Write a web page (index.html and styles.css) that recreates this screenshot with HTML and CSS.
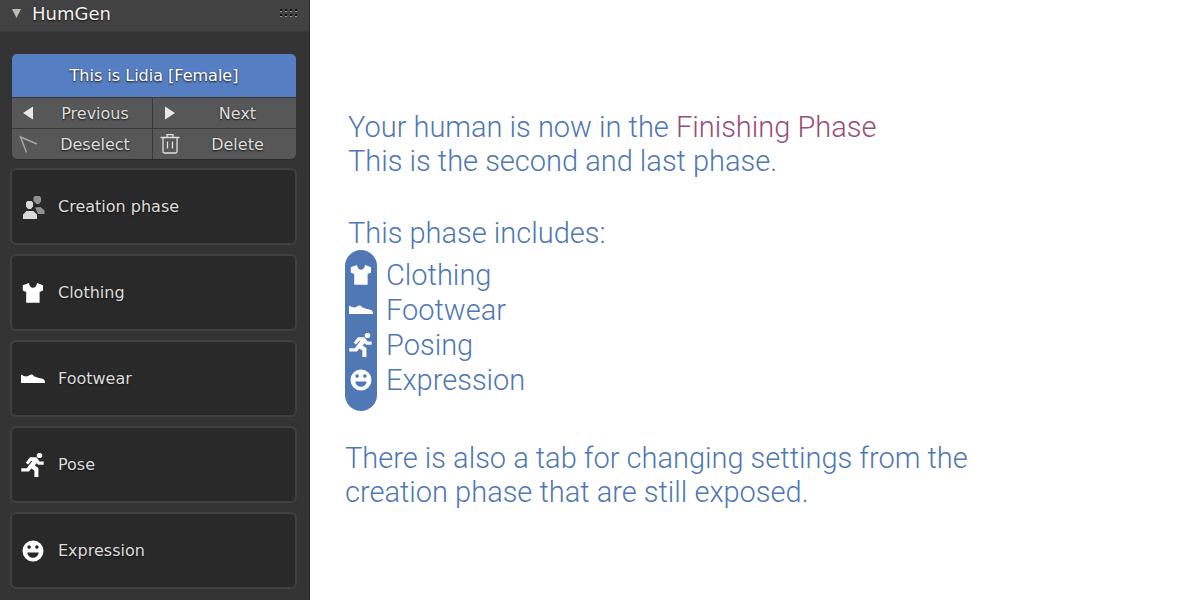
FILE: index.html
```html
<!DOCTYPE html>
<html lang="en">
<head>
<meta charset="utf-8">
<title>HumGen</title>
<link rel="stylesheet" href="styles.css">
</head>
<body>
<svg class="defs" aria-hidden="true">
  <symbol id="shirt" viewBox="0 0 24 24"><path d="M8 2 1.800 4.200v5.300l3.400 1.500v10.800h13.400V11l3.400-1.500V4.200L16 2C15.700 8.400 8.300 8.400 8 2z"/></symbol>
  <symbol id="shoe" viewBox="0 0 24 24"><path d="M0 8.200 1 7.500C2 9.300 4.500 9.600 6.500 9.300L10 7.500h1.200l2.300 2 4.500 1.500 3.500.7c1.800.6 2.500 1.700 2.500 4.300H0z"/></symbol>
  <symbol id="run" viewBox="0 0 24 24"><path d="M17.300 0h2.400l1.500 1.400v2.200L19.700 5h-2.400l-1.500-1.400V1.400zM9 4.300h6.500l3.200 4.200h4v3.200h-5.500l-1.700-1.500-1.700 2.300 3.600 2.500v9h-4v-6.600l-3.200-2-2.200 3H.3v-3.200h5.500L11.300 8H10l-2.800 3.600-2.500-1.800z"/></symbol>
  <symbol id="smile" viewBox="0 0 24 24"><path fill-rule="evenodd" d="M12 1.500a10.500 10.500 0 1 0 0 21 10.500 10.500 0 0 0 0-21zM8.100 6.300a1.800 1.800 0 1 1 0 3.600 1.800 1.800 0 0 1 0-3.600zm7.800 0a1.800 1.800 0 1 1 0 3.600 1.800 1.800 0 0 1 0-3.600zM6.300 13.500h11.400c-.8 7-10.600 7-11.400 0z"/></symbol>
</svg>
<div class="app">
  <aside class="panel">
    <h1 class="panel-head">
      <svg class="caret" viewBox="0 0 9 9"><path d="M0 0h9L4.500 9z"/></svg>
      <span class="panel-title">HumGen</span>
      <svg class="grip" viewBox="0 0 17 8"><g class="grip-dark"><path d="M0 0h2v2H0zM5 0h2v2H5zM10 0h2v2h-2zM15 0h2v2h-2zM0 5h2v2H0zM5 5h2v2H5zM10 5h2v2h-2zM15 5h2v2h-2z"/></g><path d="M0 2h2v1H0zM5 2h2v1H5zM10 2h2v1h-2zM15 2h2v1h-2zM0 7h2v1H0zM5 7h2v1H5zM10 7h2v1h-2zM15 7h2v1h-2z"/></svg>
    </h1>
    <div class="panel-body">
      <div class="actions">
        <button class="current" type="button">This is Lidia [Female]</button>
        <button class="action" type="button"><svg class="action-icon" viewBox="0 0 22 22"><path d="M15 4.500v13L5 11z"/></svg><span>Previous</span></button>
        <button class="action" type="button"><svg class="action-icon" viewBox="0 0 22 22"><path d="M6 4.500v13l10-6.500z"/></svg><span>Next</span></button>
        <button class="action" type="button"><svg class="action-icon" viewBox="0 0 22 22"><path class="cursor" d="M8.500 19.500 2.500 4l16.500 7"/></svg><span>Deselect</span></button>
        <button class="action" type="button"><svg class="action-icon" viewBox="0 0 22 22"><path class="bin" d="M1.500 4.500h19M8 4V1.700h6V4M4 5v13.500q0 1.500 1.500 1.500h11q1.500 0 1.500-1.500V5M8.500 8.500v7M13.500 8.500v7"/></svg><span>Delete</span></button>
      </div>
      <button class="section" type="button"><svg class="section-icon" viewBox="0 0 24 24"><path class="back" d="M13.500 1h5L20 2.500v4L18 9h-2.500L12.500 6V2.500zM14 12.500l5.500-.5 4 3.500V19H17z"/><path class="front" d="M6.500 6h4L12 7.500v4L10 14H7l-2-2.500v-4zM2 24v-4.500L5.500 16h7l3.500 3.500V24z"/></svg>Creation phase</button>
      <button class="section" type="button"><svg class="section-icon"><use href="#shirt"/></svg>Clothing</button>
      <button class="section" type="button"><svg class="section-icon"><use href="#shoe"/></svg>Footwear</button>
      <button class="section" type="button"><svg class="section-icon"><use href="#run"/></svg>Pose</button>
      <button class="section" type="button"><svg class="section-icon"><use href="#smile"/></svg>Expression</button>
    </div>
  </aside>
  <main class="guide">
    <p class="intro">Your human is now in the <span class="phase">Finishing Phase</span><br>This is the second and last phase.</p>
    <p class="lead">This phase includes:</p>
    <div class="includes">
      <div class="pill">
        <svg class="pill-icon"><use href="#shirt"/></svg>
        <svg class="pill-icon"><use href="#shoe"/></svg>
        <svg class="pill-icon"><use href="#run"/></svg>
        <svg class="pill-icon"><use href="#smile"/></svg>
      </div>
      <ul class="names"><li>Clothing</li><li>Footwear</li><li>Posing</li><li>Expression</li></ul>
    </div>
    <p class="note">There is also a tab for changing settings from the<br>creation phase that are still exposed.</p>
  </main>
</div>
</body>
</html>
```
FILE: styles.css
```css
* { box-sizing: border-box; }
body { margin: 0; background: #fff; }
.defs { position: absolute; width: 0; height: 0; }
.app { display: flex; min-height: 100vh; }

.panel {
  flex: 0 0 310px;
  background: #333;
  border-right: 1px solid #292929;
  color: #dcdcdc;
  font-family: "DejaVu Sans", sans-serif;
  font-size: 16px;
}
.panel button { font: inherit; color: inherit; border: 0; margin: 0; text-shadow: 0 1px 2px #111; }
.panel-head {
  display: flex;
  align-items: center;
  height: 32px;
  margin: 0;
  padding: 0 12px 5px 12px;
  background: #424242;
  border-bottom: 1px solid #393939;
  font-size: 18px;
  font-weight: 400;
  color: #f0f0f0;
  text-shadow: 0 1px 2px #111;
}
.caret { width: 9px; height: 9px; margin-right: 11px; fill: #bbb; }
.panel-title { flex: 1; }
.grip { width: 17px; height: 8px; fill: #999; }
.grip-dark { fill: #111; }
.panel-body { display: flex; flex-direction: column; gap: 9px; padding: 22px 12px 12px 10px; }

.actions {
  display: grid;
  grid-template-columns: 140fr 143fr;
  gap: 1px;
  margin: 0 1px 0 2px;
  border-radius: 5px;
  overflow: hidden;
  background: #383838;
  box-shadow: 0 1px 1px #292929;
}
.panel .current { grid-column: 1 / -1; height: 43px; background: #567fc3; color: #fff; }
.action { display: flex; align-items: center; height: 30px; padding: 0 6px; background: #575757; }
.action span { flex: 1; text-align: center; padding-left: 4px; }
.action-icon { width: 22px; height: 22px; fill: #e8e8e8; }
.cursor { fill: none; stroke: #a5a5a5; stroke-width: 1.500; }
.bin { fill: none; stroke: #e0e0e0; stroke-width: 1.300; }

.section {
  display: flex;
  align-items: center;
  gap: 13px;
  height: 77px;
  padding: 0 9px;
  background: #292929;
  text-align: left;
}
.panel .section { border: 2px solid #404040; border-radius: 6px; }
.section-icon { width: 24px; height: 24px; fill: #fff; }
.back { fill: #919191; }
.front { fill: #dadada; }

.guide {
  flex: 1;
  padding: 110px 24px 24px 35px;
  color: #4f77b3;
  font: 300 29px/34px Roboto, sans-serif;
}
.guide p { margin: 0; }
.intro, .guide .lead { padding-left: 3px; }
.guide .lead { margin-top: 38px; }
.phase { color: #984d76; }
.includes { display: flex; gap: 9px; }
.pill {
  display: flex;
  flex-direction: column;
  align-items: center;
  gap: 11px;
  width: 32px;
  height: 161px;
  padding-top: 13px;
  border-radius: 16px;
  background: #5078b4;
}
.pill-icon { width: 24px; height: 24px; fill: #fff; }
.names { list-style: none; margin: 0; padding: 8px 0 0; line-height: 35px; }
.guide .note { margin-top: 30px; }
```
